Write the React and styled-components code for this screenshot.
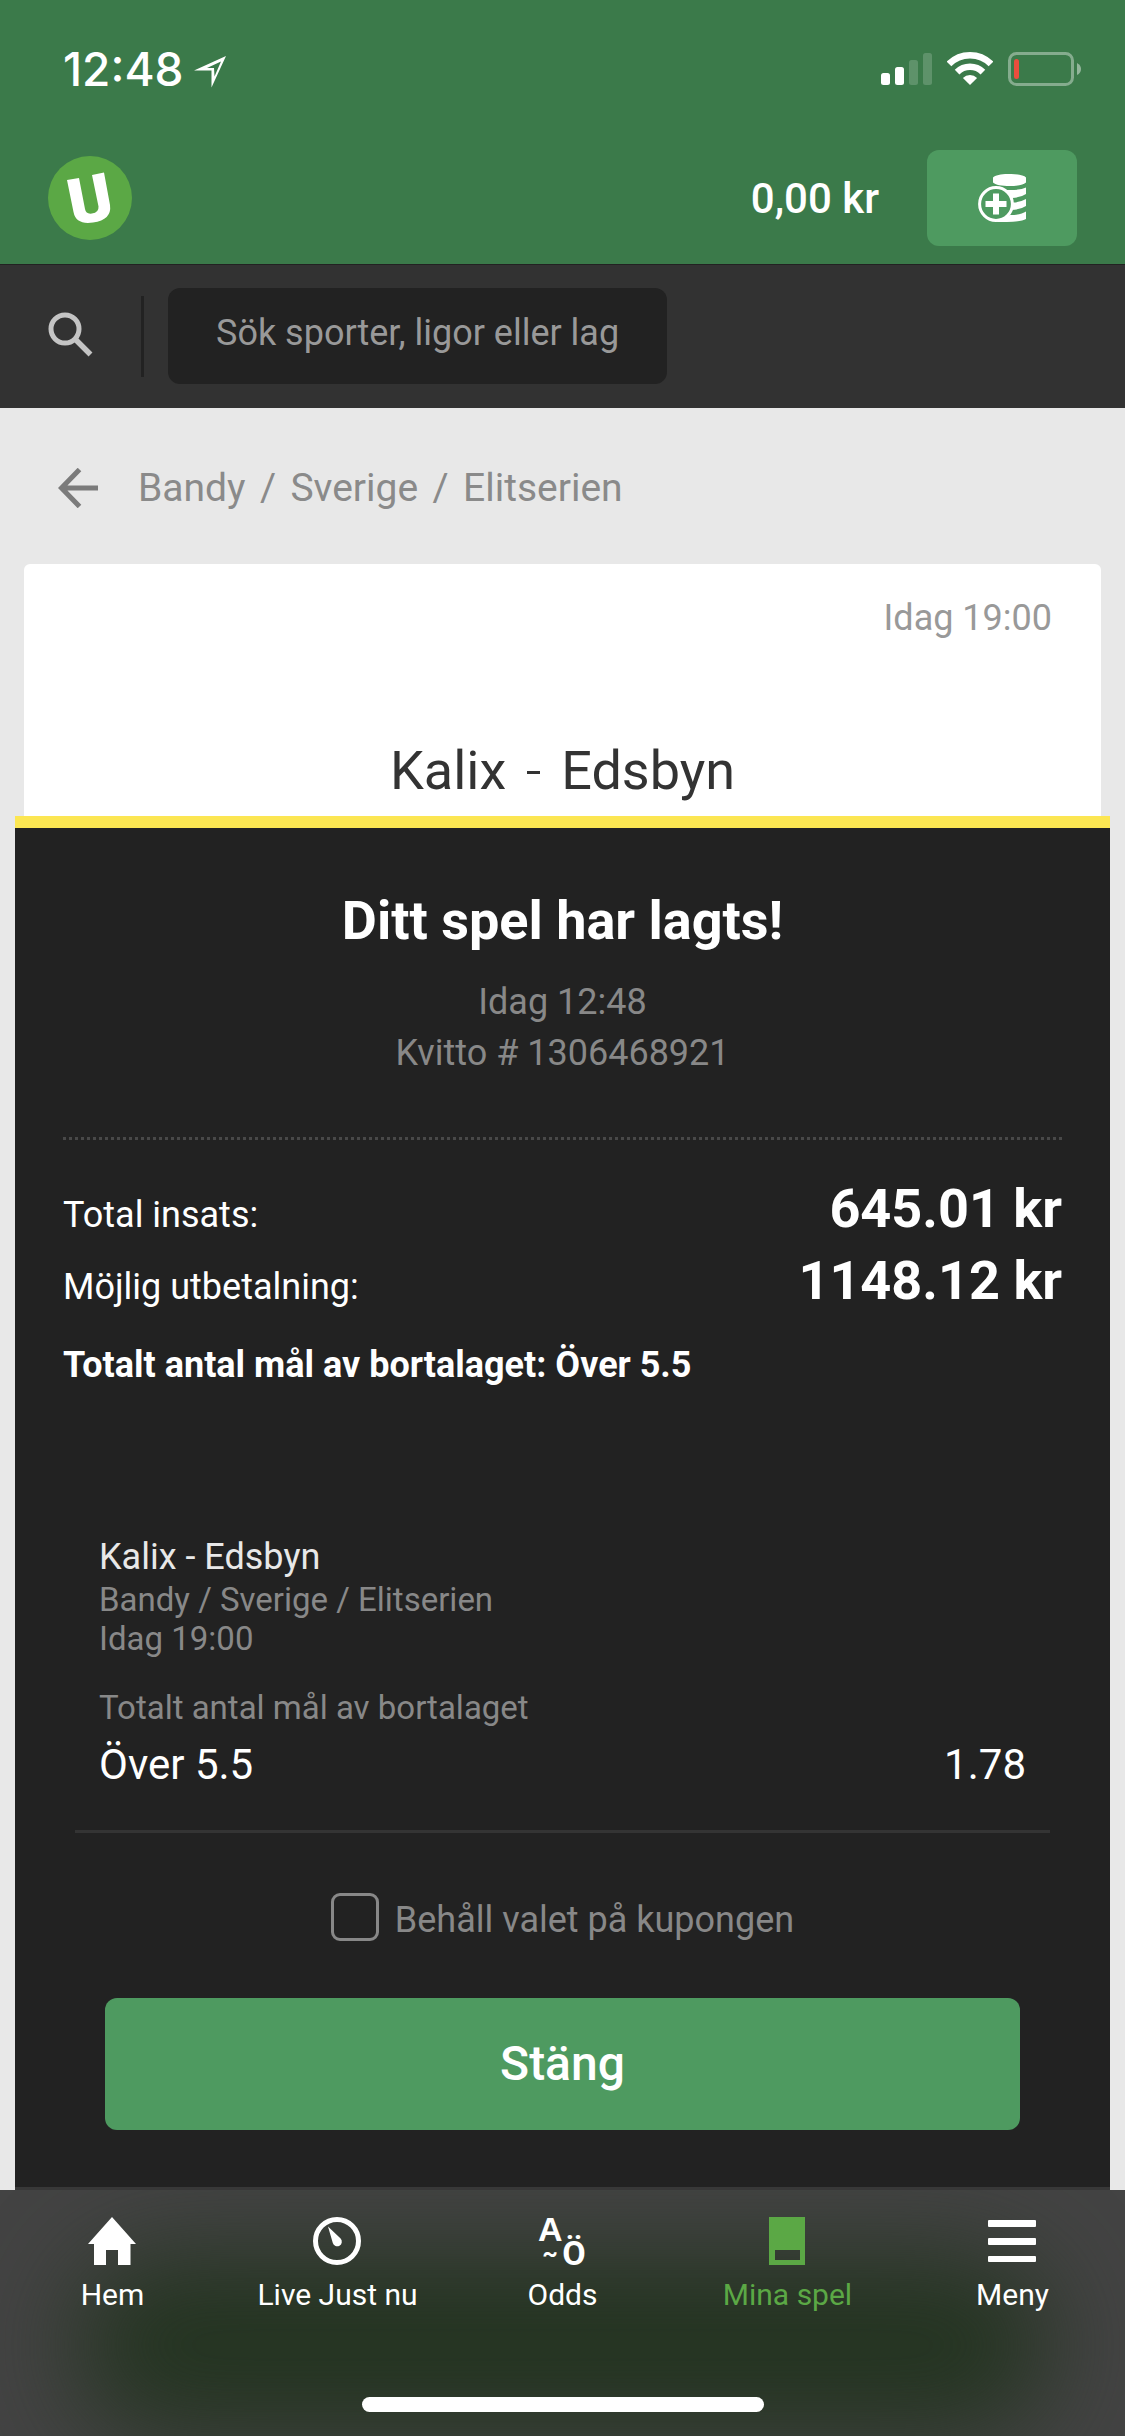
import React from "react";
import styled, { createGlobalStyle } from "styled-components";

const navItems = [
  { id: "home", label: "Hem" },
  { id: "live", label: "Live Just nu" },
  { id: "odds", label: "Odds" },
  { id: "bets", label: "Mina spel", active: true },
  { id: "menu", label: "Meny" },
];

function NavIcon({ id }) {
  if (id === "home") {
    return (
      <svg width="48" height="48" viewBox="0 0 48 48" fill="currentColor">
        <path d="M24 0 L48 27 H42.5 V48 H30 V33 H18 V48 H6 V27 H0 Z" />
      </svg>
    );
  }
  if (id === "live") {
    return (
      <svg width="48" height="48" viewBox="0 0 48 48" fill="currentColor">
        <circle cx="24" cy="24" r="21.5" fill="none" stroke="currentColor" strokeWidth="5" />
        <path d="M15 9.5 L27.6 21.6 A4.6 4.6 0 1 1 19.8 26 Z" />
      </svg>
    );
  }
  if (id === "odds") {
    return (
      <OddsIcon>
        <OddsLetter>A</OddsLetter>
        <OddsTilde>~</OddsTilde>
        <OddsLast>Ö</OddsLast>
      </OddsIcon>
    );
  }
  if (id === "bets") {
    return (
      <svg width="36" height="48" viewBox="0 0 36 48" fill="currentColor">
        <path fillRule="evenodd" d="M0 0 H36 V48 H0 Z M6 33 V43 H31 V33 Z" />
      </svg>
    );
  }
  return (
    <svg width="48" height="48" viewBox="0 0 48 48" fill="currentColor">
      <rect y="3" width="48" height="7" rx="1" />
      <rect y="21" width="48" height="7" rx="1" />
      <rect y="39" width="48" height="6" rx="1" />
    </svg>
  );
}

function App() {
  return (
    <Page>
      <GlobalStyle />

      {/* Status bar */}
      <StatusBar>
        <Clock>12:48</Clock>
        <LocationArrow viewBox="0 0 32 32">
          <path
            fillRule="evenodd"
            d="M32 0 L0 14.5 H17.5 V31.5 Z M27 5.5 L13 12 H20 L20.5 20.5 Z"
            fill="#fff"
          />
        </LocationArrow>
        <StatusIcons>
          <svg width="51" height="34" viewBox="0 0 51 34" fill="#fff">
            <rect x="0" y="21" width="9" height="12" rx="2.5" />
            <rect x="14" y="15" width="9" height="18" rx="2.5" />
            <rect x="28" y="8" width="9" height="25" rx="2.5" opacity=".18" />
            <rect x="42" y="1" width="9" height="32" rx="2.5" opacity=".18" />
          </svg>
          <svg width="46" height="34" viewBox="0 0 46 34" fill="none" stroke="#fff">
            <path d="M2 12 A29.7 29.7 0 0 1 44 12" strokeWidth="6.6" />
            <path d="M10.1 20.1 A18.3 18.3 0 0 1 35.9 20.1" strokeWidth="6.6" />
            <path d="M23 33 L15.9 25.9 A10 10 0 0 1 30.1 25.9 Z" fill="#fff" stroke="none" />
          </svg>
          <svg width="74" height="34" viewBox="0 0 74 34">
            <rect x="1.5" y="1.5" width="63" height="31" rx="7" fill="none" stroke="#fff" strokeOpacity=".38" strokeWidth="3" />
            <rect x="6" y="7" width="5" height="20" rx="2.5" fill="#eb4d3d" />
            <path d="M69 11 Q73 13 73 17 Q73 21 69 23 Z" fill="#fff" opacity=".45" />
          </svg>
        </StatusIcons>
      </StatusBar>

      {/* Header with logo and balance */}
      <Header>
        <Logo viewBox="0 0 84 84">
          <circle cx="42" cy="42" r="42" fill="#5ba845" />
          <path
            d="M19 24 L31 22 L37 53 Q38 58.500 44 57.500 Q51 56.500 50.500 50.500 L44 19 L56 16.500 L62 49 Q64 64 45 66.500 Q28 69 25.500 56 Z"
            fill="#fff"
          />
        </Logo>
        <Balance>0,00 kr</Balance>
        <DepositButton>
          <svg width="48" height="48" viewBox="0 0 48 48">
            <g fill="#fff">
              <path d="M15 3.5 C19 -1.2 44 -1.2 48 3.5 V8.5 C44 13.2 19 13.2 15 8.5 Z" />
              <path d="M28 16 Q42 16.500 48 13.500 V20 Q43 23.500 34 24 Z" />
              <path d="M35 28.500 Q43 28 48 25 V32 Q43 35.500 33 36 Z" />
              <path d="M32 41 Q43 41 48 37.500 V45 Q42 48.500 18 48 Z" />
            </g>
            <circle cx="18" cy="30" r="16.4" fill="#4e9a60" stroke="#fff" strokeWidth="3" />
            <path d="M18 19.500 V40.500 M7.500 30 H28.500" stroke="#fff" strokeWidth="6" />
          </svg>
        </DepositButton>
      </Header>

      {/* Search */}
      <SearchBar>
        <SearchIcon viewBox="0 0 46 46" fill="none" stroke="#c4c4c4">
          <circle cx="17" cy="17" r="14" strokeWidth="5" />
          <path d="M28 28 L42.500 42.500" strokeWidth="5.500" />
        </SearchIcon>
        <SearchDivider />
        <SearchField>Sök sporter, ligor eller lag</SearchField>
      </SearchBar>

      {/* Breadcrumbs */}
      <Breadcrumbs>
        <svg width="40" height="40" viewBox="0 0 40 40" fill="none" stroke="#7b7b7b" strokeWidth="5">
          <path d="M21.500 1.500 L3.500 20 L21.500 38.500 M4 20 H40" />
        </svg>
        <CrumbList>
          <span>Bandy</span>
          <span>/</span>
          <span>Sverige</span>
          <span>/</span>
          <span>Elitserien</span>
        </CrumbList>
      </Breadcrumbs>

      {/* Match card */}
      <MatchCard>
        <MatchTime>Idag 19:00</MatchTime>
        <MatchTitle>
          <span>Kalix</span>
          <MatchDash />
          <span>Edsbyn</span>
        </MatchTitle>
      </MatchCard>

      {/* Receipt */}
      <Receipt>
        <ReceiptTitle>Ditt spel har lagts!</ReceiptTitle>
        <ReceiptMeta>
          Idag 12:48
          <br />
          Kvitto # 1306468921
        </ReceiptMeta>
        <DottedLine />
        <TotalRow>
          <TotalLabel>Total insats:</TotalLabel>
          <TotalAmount>645.01 kr</TotalAmount>
        </TotalRow>
        <TotalRow>
          <TotalLabel>Möjlig utbetalning:</TotalLabel>
          <TotalAmount>1148.12 kr</TotalAmount>
        </TotalRow>
        <Selection>Totalt antal mål av bortalaget: Över 5.5</Selection>

        <Bet>
          <BetMatch>Kalix - Edsbyn</BetMatch>
          <BetInfo>Bandy / Sverige / Elitserien</BetInfo>
          <BetInfo>Idag 19:00</BetInfo>
          <BetMarket>Totalt antal mål av bortalaget</BetMarket>
          <BetOutcome>
            <span>Över 5.5</span>
            <span>1.78</span>
          </BetOutcome>
        </Bet>

        <KeepRow>
          <Checkbox />
          <KeepLabel>Behåll valet på kupongen</KeepLabel>
        </KeepRow>
        <CloseButton>Stäng</CloseButton>
      </Receipt>

      {/* Bottom navigation */}
      <BottomNav>
        <NavRow>
          {navItems.map((item) => (
            <NavItem key={item.id} $active={item.active}>
              <NavIconBox>
                <NavIcon id={item.id} />
              </NavIconBox>
              <span>{item.label}</span>
            </NavItem>
          ))}
        </NavRow>
        <HomeIndicator />
      </BottomNav>
    </Page>
  );
}

// Styles
const GlobalStyle = createGlobalStyle`
  * {
    box-sizing: border-box;
  }
  body {
    margin: 0;
    font-family: Roboto, "Liberation Sans", sans-serif;
  }
  svg {
    display: block;
    flex: none;
  }
`;

const Page = styled.div`
  width: 1125px;
  height: 2436px;
  overflow: hidden;
  display: flex;
  flex-direction: column;
  background: #e8e8e8;
`;

const StatusBar = styled.div`
  height: 132px;
  flex: none;
  display: flex;
  align-items: center;
  padding: 6px 43px 0 63px;
  background: #3b7a4a;
`;

const Clock = styled.span`
  font-family: Inter, sans-serif;
  font-weight: 550;
  font-size: 46px;
  line-height: 54px;
  color: #fff;
  width: 131px;
`;

const LocationArrow = styled.svg`
  width: 32px;
  height: 32px;
  margin-top: 6px;
`;

const StatusIcons = styled.div`
  display: flex;
  align-items: center;
  gap: 15px;
  margin-left: auto;
`;

const Header = styled.header`
  height: 132px;
  flex: none;
  display: flex;
  align-items: center;
  padding: 0 48px;
  background: #3b7a4a;
`;

const Logo = styled.svg`
  width: 84px;
  height: 84px;
`;

const Balance = styled.span`
  margin-left: auto;
  padding-top: 2px;
  font-size: 42px;
  font-weight: 500;
  line-height: 48px;
  color: #fff;
`;

const DepositButton = styled.button`
  width: 150px;
  height: 96px;
  margin-left: 48px;
  padding: 0;
  border: 0;
  border-radius: 12px;
  background: #4e9a60;
  display: flex;
  align-items: center;
  justify-content: center;
`;

const SearchBar = styled.div`
  height: 144px;
  flex: none;
  display: flex;
  align-items: center;
  padding: 0 0 1px 48px;
  background: #323232;
  border-top: 1px solid #222;
`;

const SearchIcon = styled.svg`
  width: 46px;
  height: 46px;
  margin-bottom: 2px;
`;

const SearchDivider = styled.div`
  width: 3px;
  height: 81px;
  margin-left: 47px;
  background: #222;
`;

const SearchField = styled.div`
  width: 499px;
  height: 96px;
  margin-left: 24px;
  padding-left: 48px;
  border-radius: 12px;
  background: #222;
  font-size: 36px;
  line-height: 91px;
  color: #999;
  white-space: nowrap;
`;

const Breadcrumbs = styled.nav`
  height: 156px;
  flex: none;
  display: flex;
  align-items: center;
  padding: 3px 0 0 58px;
`;

const CrumbList = styled.div`
  display: flex;
  gap: 14.4px;
  margin-left: 40px;
  font-size: 39px;
  line-height: 46px;
  color: #8a8a8a;
`;

const MatchCard = styled.section`
  height: 252px;
  flex: none;
  margin: 0 24px;
  border-radius: 6px 6px 0 0;
  background: #fff;
`;

const MatchTime = styled.div`
  padding: 33px 49px 0 0;
  font-size: 36px;
  line-height: 42px;
  text-align: right;
  color: #999;
`;

const MatchTitle = styled.h1`
  margin: 100px 0 0;
  display: flex;
  align-items: center;
  justify-content: center;
  font-size: 54px;
  font-weight: 400;
  line-height: 64px;
  color: #333;
`;

const MatchDash = styled.div`
  width: 13px;
  height: 3px;
  margin: 2px 21px 0;
  background: #333;
`;

const Receipt = styled.section`
  height: 1374px;
  flex: none;
  margin: 0 15px;
  padding: 0 48px;
  border-top: 12px solid #fce652;
  border-bottom: 3px solid #383838;
  background: #222;
  color: #fff;
  display: flex;
  flex-direction: column;
`;

const ReceiptTitle = styled.h2`
  margin: 61px 0 0;
  font-size: 54px;
  font-weight: 700;
  line-height: 64px;
  text-align: center;
`;

const ReceiptMeta = styled.div`
  margin-top: 24px;
  font-size: 36px;
  line-height: 51px;
  text-align: center;
  color: #888;
`;

const DottedLine = styled.div`
  height: 3px;
  margin: 58px 0 33px;
  background: repeating-linear-gradient(90deg, #484848 0 3px, #222 3px 6px);
`;

const TotalRow = styled.div`
  height: 72px;
  display: flex;
  align-items: baseline;
  justify-content: space-between;
`;

const TotalLabel = styled.span`
  font-size: 36px;
`;

const TotalAmount = styled.span`
  font-size: 54px;
  font-weight: 700;
  line-height: 72px;
`;

const Selection = styled.div`
  margin-top: 27px;
  font-size: 36px;
  font-weight: 700;
  line-height: 42px;
`;

const Bet = styled.div`
  margin: 149px 12px 0;
  padding: 0 24px;
  height: 298px;
  border-bottom: 3px solid #343434;
`;

const BetMatch = styled.div`
  font-size: 36px;
  line-height: 45px;
  color: #e8e8e8;
`;

const BetInfo = styled.div`
  font-size: 33px;
  line-height: 39px;
  color: #888;
`;

const BetMarket = styled(BetInfo)`
  margin-top: 30px;
`;

const BetOutcome = styled.div`
  display: flex;
  justify-content: space-between;
  margin-top: 14px;
  font-size: 42px;
  line-height: 48px;
`;

const KeepRow = styled.label`
  display: flex;
  align-items: center;
  justify-content: center;
  gap: 16px;
  height: 48px;
  margin-top: 60px;
  font-size: 36px;
  color: #888;
`;

const Checkbox = styled.div`
  width: 48px;
  height: 48px;
  border: 3px solid #888;
  border-radius: 9px;
`;

const KeepLabel = styled.span`
  padding-top: 6px;
`;

const CloseButton = styled.button`
  height: 132px;
  margin: 57px 42px 0;
  padding: 0 0 2px;
  border: 0;
  border-radius: 12px;
  background: #4e9a60;
  color: #fff;
  font-family: inherit;
  font-size: 48px;
  font-weight: 500;
`;

const BottomNav = styled.nav`
  flex: 1;
  display: flex;
  flex-direction: column;
  align-items: center;
  position: relative;
  isolation: isolate;
  overflow: hidden;
  background: #434343;

  /* dark green glow shining through the bar */
  &::before {
    content: "";
    position: absolute;
    z-index: -1;
    top: 66px;
    left: 75px;
    right: 75px;
    height: 178px;
    border-radius: 89px;
    background: #243421;
    filter: blur(50px);
  }
`;

const NavRow = styled.div`
  width: 100%;
  display: grid;
  grid-template-columns: repeat(5, 1fr);
  padding-top: 27px;
`;

const NavItem = styled.div`
  display: flex;
  flex-direction: column;
  align-items: center;
  font-size: 30px;
  line-height: 36px;
  color: ${(props) => (props.$active ? "#5ba845" : "#fff")};
`;

const NavIconBox = styled.div`
  height: 48px;
  margin: 0 1px 12px 0;
`;

const OddsIcon = styled.div`
  display: grid;
  grid-template-columns: 24px 24px;
  grid-template-rows: 25px 23px;
  font-weight: 700;
  text-align: center;
`;

const OddsLetter = styled.span`
  font-family: "Liberation Sans", sans-serif;
  font-size: 34px;
  line-height: 25px;
`;

const OddsTilde = styled.span`
  grid-row: 2;
  font-size: 24px;
  line-height: 22px;
`;

const OddsLast = styled.span`
  grid-row: 2;
  font-size: 34px;
  line-height: 22px;
`;

const HomeIndicator = styled.div`
  width: 402px;
  height: 15px;
  margin-top: 84px;
  border-radius: 8px;
  background: #fff;
`;

export default App;
